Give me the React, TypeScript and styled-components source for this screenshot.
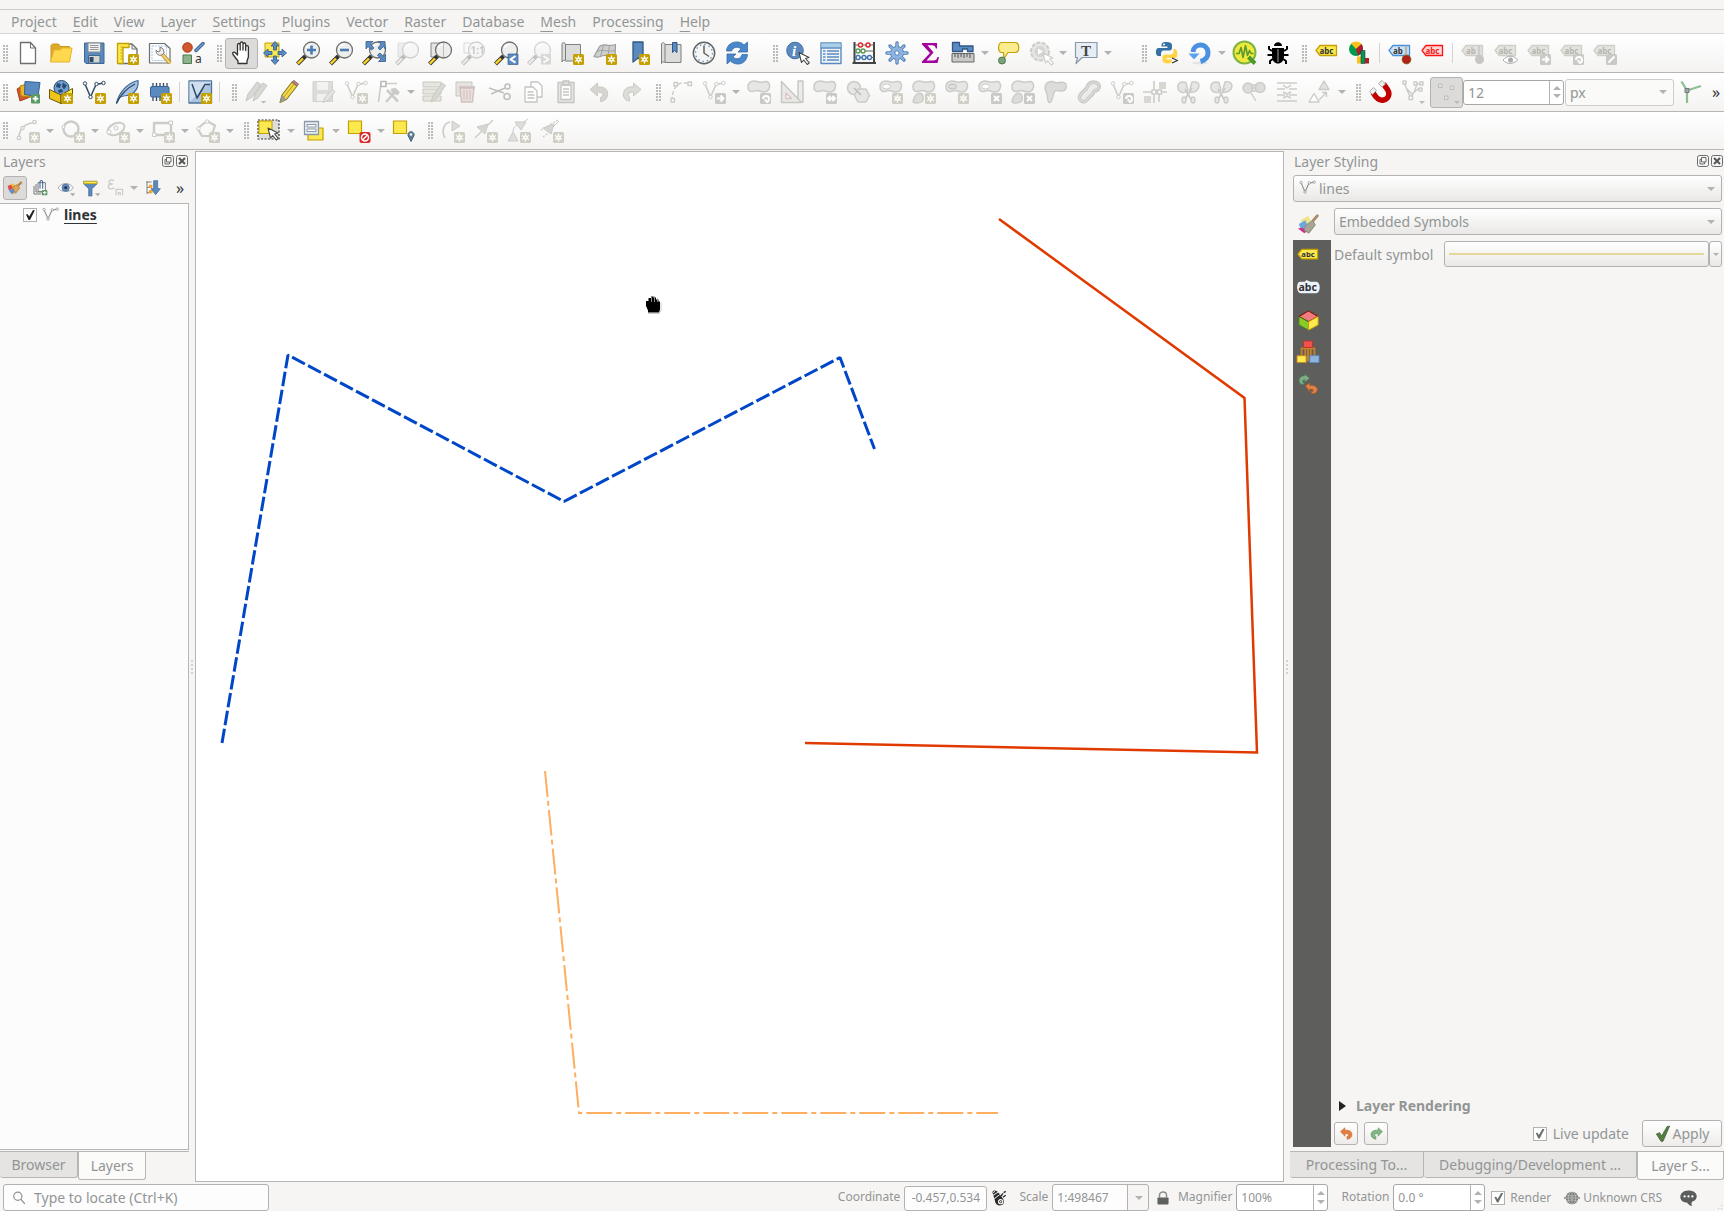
import React, { ReactNode } from 'react';
import styled, { createGlobalStyle, css } from 'styled-components';

const c = {
  window: '#f6f5f4',
  text: '#929595',
  line: '#b8b6b4',
  soft: '#cfcdcb',
  dark: '#2e3436',
  blue: '#5b8ac0',
  off: '#cbcbc7',
  offFill: '#e6e6e4',
};

const Global = createGlobalStyle`
  * { box-sizing: border-box; }
  html, body { margin: 0; background: ${c.window}; }
  body { overflow: hidden; }
  body, button, input, select {
    font-family: "Noto Sans", "Open Sans", sans-serif;
    font-size: 14px;
    color: ${c.text};
  }
  button { padding: 0; border: 0; background: none; }
`;

/* ---------- layout ---------- */

const Window = styled.div`
  display: flex;
  flex-direction: column;
  height: 100vh;
  overflow: hidden;
  background: ${c.window};
`;
const TitleStrip = styled.div`
  flex: none;
  height: 10px;
  border-bottom: 1px solid ${c.soft};
`;
const MenuBar = styled.nav`
  display: flex;
  flex: none;
  height: 24px;
  padding: 0 3px;
  border-bottom: 1px solid #d8d6d4;
`;
const MenuItem = styled.button`
  padding: 0 8px;
  line-height: 23px;
  u { text-decoration-thickness: 1px; text-underline-offset: 4px; }
`;
const Toolbar = styled.div<{ $h: number }>`
  display: flex;
  align-items: center;
  flex: none;
  height: ${p => p.$h}px;
  overflow: hidden;
  border-bottom: 1px solid ${c.line};
  background: linear-gradient(#fff, #f4f3f2);
`;
const Handle = styled.span<{ $gap?: number }>`
  flex: none;
  width: 11px;
  height: 17px;
  margin-left: ${p => p.$gap ?? 0}px;
  padding: 0 3px;
  background: radial-gradient(circle at 1px 1px, #bdbbb9 1px, transparent 1px) 3px 0 / 3px 3px repeat;
  background-clip: content-box;
`;
const Separator = styled.span`
  flex: none;
  width: 1px;
  height: 20px;
  margin: 0 3px;
  background: #d5d3d1;
`;
const ToolButton = styled.button<{ $pressed?: boolean; $size?: number }>`
  display: flex;
  flex: none;
  align-items: center;
  justify-content: center;
  width: ${p => p.$size ?? 33}px;
  height: ${p => (p.$size ? 24 : 31)}px;
  border: 1px solid transparent;
  border-radius: 3px;
  ${p => p.$pressed && css`
    border-color: #b5b3b1;
    background: #dcdbda;
  `}
`;
const ArrowButton = styled.button`
  display: flex;
  flex: none;
  align-items: center;
  justify-content: center;
  width: 12px;
  height: 31px;
`;
const Triangle = styled.span<{ $up?: boolean; $small?: boolean }>`
  display: block;
  border: solid transparent;
  border-width: ${p => (p.$small ? '0 3px' : '0 4px')};
  ${p => (p.$up ? 'border-bottom' : 'border-top')}: ${p => (p.$small ? 3 : 4)}px solid #b4b2b0;
`;
const More = styled.button`
  flex: none;
  width: 16px;
  margin-left: auto;
  color: ${c.dark};
  font-size: 16px;
  line-height: 20px;
`;
const Main = styled.main`
  display: flex;
  flex: 1;
  min-height: 0;
`;
const Dock = styled.section<{ $w: number }>`
  display: flex;
  flex-direction: column;
  flex: none;
  width: ${p => p.$w}px;
  padding-bottom: 2px;
`;
const Splitter = styled.div<{ $w: number }>`
  display: flex;
  align-items: center;
  justify-content: center;
  flex: none;
  width: ${p => p.$w}px;
  &::after {
    content: '';
    width: 2px;
    height: 15px;
    background: radial-gradient(circle, #d4d2d0 1px, transparent 1px) 0 0 / 2px 4px;
  }
`;
const Canvas = styled.div`
  flex: 1;
  min-width: 0;
  margin-top: 1px;
  border: 1px solid ${c.line};
  background: #fff;
  svg { display: block; width: 100%; height: 100%; }
`;
const DockTitle = styled.header<{ $left: number }>`
  display: flex;
  align-items: center;
  gap: 2px;
  flex: none;
  height: 25px;
  padding: 0 1px 3px ${p => p.$left}px;
  h2 { flex: 1; margin: 0; font-size: 14px; font-weight: 400; }
  button { display: flex; }
`;
const LayerTools = styled.div`
  display: flex;
  align-items: center;
  flex: none;
  height: 28px;
  padding: 0 1px 3px 3px;
`;
const Tree = styled.ul`
  flex: 1;
  margin: 0;
  padding: 1px 0 0 23px;
  list-style: none;
  border: 1px solid ${c.line};
  border-left: 0;
  background: #fcfcfc;
`;
const TreeRow = styled.li`
  display: flex;
  align-items: center;
  gap: 5px;
  height: 20px;
  label {
    color: ${c.dark};
    font-weight: 700;
    line-height: 20px;
    text-decoration: underline;
    text-decoration-thickness: 1px;
    text-underline-offset: 3px;
  }
`;
const Check = styled.input<{ $strong?: boolean }>`
  appearance: none;
  display: grid;
  place-content: center;
  flex: none;
  width: 14px;
  height: 14px;
  margin: 0;
  border: 1px solid #b4b2b0;
  background: #fff;
  &:checked::after {
    content: '';
    width: 10px;
    height: 10px;
    background: ${p => (p.$strong ? '#222' : '#6b6e6e')};
    clip-path: polygon(10% 45%, 28% 42%, 42% 66%, 80% 0, 98% 6%, 50% 100%, 36% 100%);
  }
`;
const Tabs = styled.div`
  display: flex;
  align-items: flex-start;
  flex: none;
  height: 29px;
  margin-top: 1px;
  border-top: 1px solid ${c.line};
`;
const Tab = styled.button<{ $w: number; $active?: boolean }>`
  flex: none;
  width: ${p => p.$w}px;
  height: ${p => (p.$active ? 28 : 26)}px;
  border: 1px solid ${c.line};
  border-top: 0;
  border-left-width: ${p => (p.$active ? 1 : 0)}px;
  border-radius: 0 0 3px 3px;
  background: ${p => (p.$active ? '#fbfbfa' : '#e5e4e2')};
  line-height: 24px;
`;
const StyleBody = styled.div`
  display: flex;
  flex: 1;
  min-height: 0;
  gap: 3px;
  padding: 6px 2px 3px 3px;
`;
const StylePage = styled.div`
  display: flex;
  flex-direction: column;
  flex: 1;
  min-width: 0;
`;
const SideTabs = styled.div`
  display: flex;
  flex-direction: column;
  width: 38px;
`;
const SideTab = styled.button`
  display: flex;
  align-items: center;
  justify-content: center;
  flex: none;
  width: 38px;
  height: 32px;
  padding-right: 8px;
`;
const SideDark = styled.div`
  display: flex;
  flex-direction: column;
  flex: 1;
  background: #5e5e5c;
`;
const ComboWrap = styled.div<{ $inset?: number }>`
  display: grid;
  align-items: center;
  flex: none;
  margin: 0 ${p => (p.$inset ? 2 : 0)}px 0 ${p => p.$inset ?? 0}px;
  > * { grid-area: 1 / 1; }
  > svg { margin-left: 6px; pointer-events: none; }
  > span { justify-self: end; margin-right: 7px; pointer-events: none; }
`;
const Select = styled.select<{ $left?: number; $flat?: boolean }>`
  appearance: none;
  width: 100%;
  height: 27px;
  padding: 0 20px 0 ${p => p.$left ?? 4}px;
  border: 1px solid ${p => (p.$flat ? '#cfcdcb' : '#b4b2b0')};
  border-radius: 3px;
  background: ${p => (p.$flat ? '#fafaf9' : 'linear-gradient(#fff, #e9e8e6)')};
`;
const SymbolRow = styled.div`
  display: flex;
  align-items: center;
  margin-top: 6px;
  > span { flex: none; width: 110px; }
`;
const SymbolButton = styled.button`
  flex: 1;
  height: 26px;
  padding: 0 4px;
  border: 1px solid #b4b2b0;
  border-radius: 3px;
  background: linear-gradient(#fff, #e9e8e6);
  i { display: block; height: 2px; background: #e4d79c; }
`;
const SymbolMenu = styled(SymbolButton)`
  display: flex;
  flex: none;
  align-items: center;
  justify-content: center;
  width: 13px;
  padding: 0;
`;
const Rendering = styled.button`
  display: flex;
  align-items: center;
  gap: 10px;
  margin-top: auto;
  padding-left: 5px;
  font-weight: 700;
  line-height: 26px;
  &::before {
    content: '';
    border-left: 7px solid #222;
    border-top: 5px solid transparent;
    border-bottom: 5px solid transparent;
  }
`;
const Actions = styled.div`
  display: flex;
  align-items: center;
  gap: 6px;
  height: 27px;
  margin-top: 1px;
  label { flex: none; margin-right: 7px; }
`;
const RaisedButton = styled.button<{ $w: number; $h: number }>`
  display: flex;
  align-items: center;
  justify-content: center;
  flex: none;
  gap: 2px;
  width: ${p => p.$w}px;
  height: ${p => p.$h}px;
  border: 1px solid #b4b2b0;
  border-radius: 3px;
  background: linear-gradient(#fff, #edecea);
`;
const Spacer = styled.span`
  flex: 1;
`;
const StatusBar = styled.footer`
  display: flex;
  align-items: flex-start;
  gap: 4px;
  flex: none;
  height: 29px;
  padding: 2px 0 0 3px;
  overflow: hidden;
  input, label, button, select { font-size: 12px; }
`;
const Locator = styled.div`
  display: flex;
  align-items: center;
  gap: 8px;
  flex: none;
  width: 266px;
  height: 27px;
  padding-left: 8px;
  border: 1px solid #b4b2b0;
  border-radius: 3px;
  background: #fdfdfd;
  && input {
    flex: 1;
    min-width: 0;
    padding: 0;
    border: 0;
    outline: 0;
    background: none;
    font-size: 14px;
  }
  input::placeholder { color: ${c.text}; opacity: 1; }
`;
const StatusLabel = styled.label<{ $w?: number }>`
  flex: none;
  width: ${p => (p.$w ? `${p.$w}px` : 'auto')};
  line-height: 26px;
  text-align: right;
  white-space: nowrap;
`;
const StatusIcon = styled.span<{ $w: number }>`
  display: flex;
  align-items: center;
  justify-content: center;
  flex: none;
  width: ${p => p.$w}px;
  height: 27px;
`;
const Field = styled.input<{ $w: number }>`
  flex: none;
  width: ${p => p.$w}px;
  height: 25px;
  margin-top: 2px;
  padding: 0 4px 2px;
  border: 1px solid #b4b2b0;
  border-radius: 3px;
  background: #fdfdfd;
  text-align: center;
`;
const SpinBox = styled.div<{ $w: number; $h: number }>`
  display: flex;
  flex: none;
  width: ${p => p.$w}px;
  height: ${p => p.$h}px;
  border: 1px solid #a9a7a5;
  border-radius: 3px;
  background: #fff;
  input {
    flex: 1;
    min-width: 0;
    padding: 0 4px;
    border: 0;
    background: none;
  }
  > span {
    display: flex;
    flex-direction: column;
    width: 14px;
    padding: 4px 0;
    border-left: 1px solid #b4b2b0;
  }
  button {
    display: flex;
    flex: 1;
    align-items: center;
    justify-content: center;
  }
`;
const StatusCheck = styled.div`
  display: flex;
  align-items: center;
  gap: 5px;
  flex: none;
  width: 71px;
  height: 27px;
  padding-left: 2px;
`;
const StatusButton = styled.button`
  display: flex;
  align-items: center;
  gap: 3px;
  flex: none;
  height: 27px;
  white-space: nowrap;
`;
const Grip = styled.span`
  flex: none;
  width: 10px;
  height: 10px;
  margin-top: 17px;
  background: radial-gradient(circle, #c4c2c0 1px, transparent 1px) 0 0 / 3px 3px;
  clip-path: polygon(100% 0, 100% 100%, 0 100%);
`;
const Drawing = styled.svg`
  flex: none;
  overflow: visible;
`;

/* ---------- drawing helpers ---------- */

const Svg = ({ children, s = 24 }: { children: ReactNode; s?: number }) => (
  <Drawing width={s} height={s} viewBox="0 0 24 24" fill="none" strokeLinejoin="round">{children}</Drawing>
);
const Dim = ({ children, o = 0.3 }: { children: ReactNode; o?: number }) => (
  <g opacity={o} filter="grayscale(1)">{children}</g>
);
const NewBadge = ({ off }: { off?: boolean }) => (
  <g>
    <rect x="13" y="13" width="11" height="11" rx="1.5" fill={off ? '#d0cfc5' : '#c4a000'} />
    <path d="M18.500 14.500v8M15 16.500l7 4M22 16.500l-7 4" stroke="#fff" strokeWidth="1.300" />
    <circle cx="18.500" cy="18.500" r="2.200" fill="#fff" />
    <circle cx="18.500" cy="18.500" r=".8" fill={off ? '#d0cfc5' : '#c4a000'} />
  </g>
);
const GreyBadge = ({ d }: { d: string }) => (
  <g>
    <rect x="13" y="13" width="11" height="11" rx="1.500" fill="#c9c9c7" />
    <path d={d} stroke="#fff" strokeWidth="2" />
  </g>
);
const arrowR = 'M15 18.500h6M18.500 15.500l3 3-3 3';
const arrowH = 'M15.500 18.500h6M17.500 16l-2.500 2.500 2.500 2.500M19.500 16l2.500 2.500-2.500 2.500';
const rot = 'M16 19a3 3 0 1 1 3 3M18.500 19v2.500';
const cross = 'M16 16l5 5M21 16l-5 5';

const Magnifier = ({ children }: { children?: ReactNode }) => (
  <g>
    <path d="M9.500 15L1.500 23" stroke="#333" strokeWidth="4" />
    <path d="M7 17.500L1.800 22.700" stroke="#f9d423" strokeWidth="2.400" />
    <circle cx="15.500" cy="9" r="8" fill="#eeeeec" stroke="#6c6f6e" strokeWidth="1.300" />
    <path d="M10.500 7a5.500 5.500 0 0 1 5-3.500" stroke="#fff" strokeWidth="1.400" />
    {children}
  </g>
);
const Tag = ({ fill, stroke, text, color = '#2e3436' }: { fill: string; stroke: string; text: string; color?: string }) => (
  <g>
    <path d="M1 9.500L5 4.500H21.500V14.500H5Z" fill={fill} stroke={stroke} strokeWidth="1.300" />
    <text x={text === 'ab' ? 5 : 4.500} y="12.500" fontFamily="Noto Sans, sans-serif" fontSize="8" fontWeight="700" fill={color}>{text}</text>
  </g>
);
const Nodes = ({ color = '#5c6468', node = '#fff' }: { color?: string; node?: string }) => (
  <g stroke={color} strokeWidth="1.500">
    <path d="M3 4L8.500 17L14 4.500 21.500 3" />
    <g fill={node} strokeWidth="1">
      <circle cx="3" cy="3.500" r="1.700" /><circle cx="8.500" cy="17" r="1.700" /><circle cx="14.500" cy="4" r="1.700" /><circle cx="21.500" cy="3" r="1.700" />
    </g>
  </g>
);
const Blob = () => (
  <path d="M1 6.500C1 1.500 6 0 10 1.500c4 1.500 6 .5 8.500 0C22 1 23.500 5 22 8.500c-1 3-3 3.500-5.500 3.500s-4-1.500-6.500-1.500S6.500 12 4 11.500 1 9 1 6.500Z" fill={c.offFill} stroke={c.off} strokeWidth="1.500" />
);
const Part = () => (
  <path d="M1 21c1-5 5-9 8-7.500 3 1.500 3 7 .5 8.500S0 23.500 1 21Z" fill="#dcdcda" stroke={c.off} strokeWidth="1.400" />
);
const Pointer = ({ x, y, color = '#444' }: { x: number; y: number; color?: string }) => (
  <path transform={`translate(${x} ${y})`} d="M0 0l2.500 10 2.200-2.500 3.600 4.500 2-1.700-3.700-4.300L10 5Z" fill="#fff" stroke={color} strokeWidth="1.100" />
);
const OffTag = ({ text }: { text: string }) => <Tag fill="#e4e4df" stroke="#cfcfc9" text={text} color="#b4b4b0" />;

/* ---------- icons ---------- */

const icons: Record<string, ReactNode> = {
  doc: <><path d="M4.500 1.500h10l5 5.500v15.500h-15z" fill="#fff" stroke="#6c6f6e" strokeWidth="1.300" /><path d="M14.500 1.500V7h5" stroke="#6c6f6e" /></>,
  folder: <><path d="M2 20V4.500L3.500 3h6l2 2.500h9V9" fill="#dfa928" stroke="#c99a1c" /><path d="M1.500 21L5 9h6l2-2h10l-2.500 14Z" fill="#ffd84d" stroke="#e3b52e" /></>,
  save: <><path d="M2.500 2h19.500v20.500h-18L2.500 21z" fill={c.blue} stroke="#3d6797" /><rect x="6" y="2" width="12.500" height="9" fill="#eee" stroke="#8a8d8c" /><path d="M8 4.500h8.500M8 6.500h8.500M8 8.500h8.500" stroke="#999" /><rect x="6.500" y="14.500" width="11.500" height="7.500" fill="#d3d7cf" stroke="#46688e" /><rect x="7.500" y="16" width="4" height="5" fill="#2e4b6d" /></>,
  newlayout: <><path d="M4 3h13l5 5v14.500H4z" fill="#fff" stroke="#6c6f6e" strokeWidth="1.300" /><path d="M17 3v5h5" stroke="#6c6f6e" /><path d="M2.500 2.500H14v4H8v16H2.500z" fill="#fce94f" stroke="#c4a000" strokeWidth="1.300" /><path d="M5.500 6h2.500M5.500 9h2.500M5.500 12h2.500M5.500 15h2.500M5.500 18h2.500" stroke="#c4a000" /><NewBadge /></>,
  layouts: <><path d="M1.500 2.500h15l5.500 5v14.500H1.500z" fill="#fff" stroke="#6c6f6e" strokeWidth="1.200" /><path d="M4 5h14.500v14.500H4z" stroke="#a9c3dd" strokeDasharray="2 1" /><path d="M14 13l8 9" stroke="#b58a2a" strokeWidth="4" /><path d="M14 13l8 9" stroke="#f2cf73" strokeWidth="2.400" /><path d="M8 9c0 4 2 6 6 5l2-2c0-3-1-5-4-6v4l-2 1Z" fill="#eee" stroke="#777" /></>,
  styles: <><circle cx="6.500" cy="6.500" r="4.800" fill="#d3572c" stroke="#a33b17" /><path d="M15 9.500L22 2.500" stroke="#3d6797" strokeWidth="3.500" strokeLinecap="round" /><path d="M15 9.500L22 2.500" stroke="#6f9bd0" strokeWidth="1.500" strokeLinecap="round" /><rect x="2" y="14" width="8.500" height="8.500" fill="#8cb38c" stroke="#4d7a4f" /><text x="14" y="22" fontFamily="Noto Sans, sans-serif" fontSize="12" fill="#333">a</text></>,
  hand: <path d="M8 22.500v-2.500L3 13.500c-1.200-2 1-3.200 2.400-1.700L7.500 14V4c0-2 2.500-2 2.700 0v5-6.500c0-2 2.700-2 2.800 0V9 3.500c0-2 2.700-2 2.700 0v6V6c.2-1.800 2.600-1.700 2.700 0v10L17 20v2.500Z" fill="#fff" stroke="#333" strokeWidth="1.300" />,
  pan: <><rect x="2" y="2" width="14" height="14" fill="#fce94f" stroke="#c4a000" /><path d="M12 .5l4 4.500h-2.500v4h-3V5H8ZM12 23.500l-4-4.500h2.500v-4h3v4H16ZM.5 12L5 8v2.500h4v3H5V16ZM23.500 12L19 16v-2.500h-4v-3h4V8Z" fill={c.blue} stroke="#35608f" strokeWidth=".9" /></>,
  zoomin: <Magnifier><path d="M15.500 4.500v9M11 9h9" stroke="#4a7bb5" strokeWidth="2.600" /></Magnifier>,
  zoomout: <Magnifier><path d="M11 9h9" stroke="#4a7bb5" strokeWidth="2.600" /></Magnifier>,
  zoomfull: <Magnifier><path d="M4 .5h7L8.500 3l3.500 4-2.500 2L6 5.500 4 8ZM23 .5h-6.500L19 3l-3 4 2 2 3.500-3.500L23.500 8ZM23.500 20.500h-7L19 18l-3.500-4 2.500-2 3.500 3.500 2-2.500Z" fill={c.blue} stroke="#35608f" strokeWidth=".8" /></Magnifier>,
  zoomsel: <Dim o={0.3}><path d="M3 2h12v14H3z" fill="#ddd38c" stroke="#c4a000" /><Magnifier /></Dim>,
  zoomlayer: <><path d="M3 2h14v14H3z" fill="#e5e5e3" stroke="#888" /><Magnifier><path d="M15.500 2v14" stroke="#bbb" /></Magnifier></>,
  zoom11: <Dim o={0.3}><path d="M3 2h12v10H3z" stroke="#888" /><Magnifier><text x="9.500" y="13" fontFamily="Noto Sans, sans-serif" fontSize="10" fontWeight="700" fill="#555">1:1</text></Magnifier></Dim>,
  zoomlast: <Magnifier><rect x="14" y="13" width="10" height="10.500" fill={c.blue} stroke="#35608f" strokeWidth=".7" /><path d="M21.500 15l-5 3.300 5 3.300" stroke="#fff" strokeWidth="2" /></Magnifier>,
  zoomnext: <Dim o={0.28}><Magnifier><rect x="14" y="13" width="10" height="10.500" fill="#888" /><path d="M16.500 15l5 3.300-5 3.300" stroke="#fff" strokeWidth="2" /></Magnifier></Dim>,
  newmap: <><path d="M2 2.500c2-2 3.500 0 3.500 1h15v16.500h-15c0-1-3.500-1-3.500 1Z" fill="#dcdcda" stroke="#7d807f" /><path d="M5.500 3.500v16" stroke="#7d807f" /><NewBadge /></>,
  new3d: <><path d="M1 15.500L6.500 5.500c5-4 8 1 16-2L22 16c-5 1-7-2-11-1.500s-6 3-10 1Z" fill="#cfcfcd" stroke="#9b9e9d" strokeWidth="1.200" /><path d="M4 10.500c5-3 10 1 18-1M10.500 4.500L7.500 15.500M16.500 4.500l-1.500 10" stroke="#9b9e9d" strokeWidth=".9" /><NewBadge /></>,
  newbook: <><path d="M7 1h10v20l-5-4-5 4Z" fill={c.blue} stroke="#2f5787" strokeWidth="1.300" /><NewBadge /></>,
  book: <><path d="M2.500 2.500c2-2 3.500 0 3.500 1h16v18H6c-1-1-3.500-1-3.500 1Z" fill="#dcdcda" stroke="#7d807f" /><path d="M6 3.500V21" stroke="#7d807f" /><path d="M13.500 1.500h4.500v10l-2.300-2-2.200 2Z" fill={c.blue} stroke="#2f5787" /></>,
  clock: <><circle cx="12" cy="12" r="10.700" fill="#f6f6f5" stroke="#5f6261" strokeWidth="1.400" /><circle cx="12" cy="12" r="8.500" stroke="#6b95c6" strokeDasharray="1.500 2.950" strokeWidth="1.400" /><path d="M12 4.500V12l5 3.500" stroke="#5f6261" strokeWidth="1.500" /></>,
  refresh: <g fill="#4a86c8" stroke="#3470b3" strokeWidth=".8"><path d="M1.500 10C2 3 8 .5 13 1c3 .3 4.500 1.500 6 3l3.500-3v10h-9.500l3-3c-3-3-8-2-9.500 2Z" /><path d="M22.500 13.500C22 20 17 23.500 12 23c-3-.3-5-1.500-6.500-3L2 23V13h9l-3 3c3 3 8 2 9-2.500Z" /></g>,
  info: <><circle cx="9" cy="9.500" r="8.300" fill={c.blue} stroke="#42709f" /><text x="6" y="14.500" fontFamily="Liberation Serif, serif" fontSize="15" fontStyle="italic" fontWeight="700" fill="#fff">i</text><Pointer x={13} y={11.500} /></>,
  table: <><rect x="2" y="2" width="20" height="20.500" fill="#eef3f8" stroke={c.blue} strokeWidth="1.400" /><path d="M2.500 2.500h19v4h-19z" fill="#a9d0e8" /><path d="M2 7h20M8 10h12M8 13h12M8 16h12M8 19h12M4 10h2.500M4 13h2.500M4 16h2.500M4 19h2.500" stroke={c.blue} strokeWidth="1.300" /></>,
  abacus: <><path d="M2.500 1v21M22 1v21M.5 22h23.500" stroke="#444" strokeWidth="2" /><path d="M3 4h19M3 10h19M3 16.500h19" stroke="#666" /><g fill="#fff" strokeWidth="1.400"><circle cx="8.500" cy="4" r="2" stroke="#d22" /><circle cx="16" cy="4" r="2" stroke="#d22" /><circle cx="6" cy="10" r="2" stroke="#5a9a55" /><circle cx="11" cy="10" r="2" stroke="#5a9a55" /><circle cx="6" cy="16.500" r="2" stroke="#3f74b0" /><circle cx="12" cy="16.500" r="2" stroke="#3f74b0" /><circle cx="17.500" cy="16.500" r="2" stroke="#3f74b0" /></g></>,
  gear: <><path d="M12 2v20M2 12h20M5 5l14 14M19 5L5 19" stroke="#4f7fb8" strokeWidth="3.400" strokeLinecap="round" /><circle cx="12" cy="12" r="6.500" fill="#8db3de" stroke="#4f7fb8" /><path d="M12 2.500v19M2.500 12h19M5.300 5.300l13.400 13.400M18.700 5.300L5.300 18.700" stroke="#8db3de" strokeWidth="1.800" strokeLinecap="round" /><circle cx="12" cy="12" r="2.200" fill="#fff" stroke="#4f7fb8" /></>,
  sigma: <path d="M4 2h15v5.500h-1.200C17.500 5 16 4.300 14 4.300H9.500l6 7.200-7 8h6.500c3 0 3.800-1 4.500-3.500H21L19.500 22H4v-1.500l8-8.500L4 3.500Z" fill="#a3009c" />,
  measure: <><path d="M1.500 1.500h7V5h13.500v5.500h-5.500V8h-5v2.500H1.500Z" fill={c.blue} stroke="#2f5787" strokeWidth="1.300" /><rect x="1" y="12.500" width="22" height="8.500" fill="#c9c9c7" stroke="#666" /><path d="M4 13v3M7 13v4M10 13v3M13 13v4M16 13v3M19 13v4" stroke="#555" /></>,
  tip: <><path d="M6 1.500h13c5 0 5 10 0 10h-7l-4 6-.5-6H5.500c-4 0-4-10 .5-10Z" fill="#fbec8e" stroke="#c4a000" strokeWidth="1.200" /><circle cx="6" cy="19.500" r="3.500" fill="#7ba37b" stroke="#4d7a4f" /></>,
  action: <><circle cx="11" cy="10.500" r="9" fill={c.offFill} stroke={c.off} strokeWidth="2" strokeDasharray="4 1.500" /><circle cx="11" cy="10.500" r="5.500" fill="#d6d6d4" /><path d="M9 7.500l5 3-5 3Z" fill="#fff" /><Pointer x={14} y={12} color={c.off} /></>,
  textbox: <><path d="M1.500 1.500h21.500v15H8L2 22.500l1.500-6h-2Z" fill="#e6edf5" stroke="#8a99a8" strokeWidth="1.200" /><text x="7" y="14.500" fontFamily="Liberation Serif, serif" fontSize="15" fontWeight="700" fill="#444">T</text></>,
  python: <><path d="M11.500 1c-5 0-5 2-5 4.500h6V7H3.500C0 7 0 15 3.500 15H6v-2.500C6 10 8 9.500 9 9.500h5.500c1.500 0 2.500-1 2.500-2.500V4c0-2-2-3-5.500-3Z" fill="#3571a6" /><path d="M12 22.500c5 0 5-2 5-4h-5.500v-1.500H20c3.500 0 3-8.500 0-9h-1.500v2.500c0 2-1.500 3-3 3H10c-1.500 0-2.500 1-2.500 2.500v3c0 2 2 3.500 4.500 3.500Z" fill="#ffd343" /><circle cx="9" cy="3.500" r="1" fill="#fff" /><path d="M17 17l5.500 2.500-5.500 2.500" stroke="#333" strokeWidth="1.200" /></>,
  reload: <><ellipse cx="12" cy="22" rx="8" ry="1.500" fill="#e3e3e3" /><path d="M5 11C5.500 2 19 1.500 20 11c.3 4-2 8-7.500 9.500" stroke="#4a90e2" strokeWidth="5" /><path d="M.5 12.500h11L6 18.500Z" fill="#5aa0f0" /></>,
  pulse: <><circle cx="11.500" cy="11.500" r="11" fill="#f0e93c" stroke="#7cb342" strokeWidth="2" /><path d="M3 12.500h3l2-6 2 10 2.500-12 2 10 2-5 1.500 3h2.500" stroke="#5c9a2f" strokeWidth="1.600" /><path d="M15.500 16l6.500 6.500" stroke="#4c9a2a" strokeWidth="4" /></>,
  bug: <><path d="M8 5c0-5 8-5 8 0ZM6 7h12v8c0 10-12 10-12 0Z" fill="#000" /><path d="M6 10L3 8V5M18 10l3-2V5M6 14H1.500M18 14h4.500M7 18l-3 2v3M17 18l3 2v3" stroke="#000" strokeWidth="2" /><path d="M12 8v13" stroke="#888" strokeWidth="1.200" /></>,
  abcY: <Tag fill="#fce94f" stroke="#c4a000" text="abc" />,
  pie: <><circle cx="8" cy="8" r="7" fill="#009a4e" /><path d="M8 8L3 2.500C6-.2 11-.2 13.500 3Z" fill="#fcc21b" /><path d="M8 8l5.500-5c2.500 3 2 9-3.500 11.500Z" fill="#b01c2a" /><rect x="9" y="15.500" width="4" height="7" fill="#fcc21b" /><rect x="13" y="9.500" width="4" height="13" fill="#009a4e" stroke="#124" strokeWidth=".5" /><rect x="17" y="17" width="4" height="5.500" fill="#b01c2a" /></>,
  abB: <><Tag fill="#cfe2f7" stroke="#4a90d9" text="ab" /><path d="M18 6v9" stroke="#b5b8b8" strokeWidth="2.600" strokeLinecap="round" /><circle cx="18.500" cy="18.500" r="4.500" fill="#b3201c" stroke="#771" strokeWidth=".7" /></>,
  abcR: <Tag fill="#ffd5d5" stroke="#f11" text="abc" color="#e22" />,
  abOff: <><OffTag text="ab" /><path d="M18 6v9" stroke="#ccc" strokeWidth="2.600" strokeLinecap="round" /><circle cx="18.500" cy="18.500" r="4.500" fill="#c9c4c4" /></>,
  abcEye: <><OffTag text="abc" /><path d="M9 19c4-5 11-5 14.500 0-4 4.500-11 4.500-14.500 0Z" fill="#fff" stroke="#aaa" /><circle cx="16.500" cy="19" r="2.500" fill="#aaa" /></>,
  abcMove: <><OffTag text="abc" /><GreyBadge d={arrowR} /></>,
  abcRot: <><OffTag text="abc" /><GreyBadge d={rot} /></>,
  abcEdit: <><OffTag text="abc" /><GreyBadge d="M15.500 21.500l6-6" /></>,

  dsm: <><path d="M1 9l9-5 4 13-10 4Z" fill="#d3572c" stroke="#a33b17" /><path d="M4 6l11-3v14l-10-1Z" fill="#f0b429" stroke="#b8860b" /><path d="M9 1.500l15 1-2 14-13.500-2Z" fill={c.blue} stroke="#35608f" /><rect x="15" y="14" width="9" height="9.500" rx="1" fill="#5d9964" /><path d="M19.500 16v5.500M16.700 18.700h5.600" stroke="#fff" strokeWidth="1.800" /></>,
  geopkg: <><circle cx="12.500" cy="8" r="7.500" fill="#6f9fd4" stroke="#2c4a6b" /><path d="M8 3l4 1-1 4-4-1ZM14 2.500l4 3-3 4-2-3ZM9 10l4-1 1 3-4 1Z" fill="#2b4a6e" /><path d="M.5 9.500L12 15v8.500L.5 18.500Z" fill="#f0c419" stroke="#6b5600" /><path d="M23.500 8.500L12 15v8.500l11.500-4Z" fill="#fce94f" stroke="#6b5600" /><NewBadge /></>,
  shp: <><Nodes color="#2f4a66" /><NewBadge /></>,
  quill: <><path d="M1.500 23C4 13 12 3 23 .5c1 8-4 14-11 15-4 .5-6 1-7.500 2Z" fill="#a6c3e4" stroke="#3d6797" strokeWidth="1.200" /><path d="M1.500 23.500C6 14 12 8 20 4" stroke="#2f4a66" strokeWidth="1.300" /><NewBadge /></>,
  chip: <><path d="M5 3v18M8.500 3v18M12 3v18M15.500 3v18M19 3v18" stroke="#2f4a66" strokeWidth="1.300" /><rect x="2.500" y="6.500" width="18.500" height="10.500" rx="1.500" fill={c.blue} stroke="#35608f" /><NewBadge /></>,
  virtual: <><rect x="1" y="1" width="22.500" height="22" fill="#aac4e0" stroke="#4d7096" strokeWidth="1.300" /><path d="M1.500 1.500h22L1.500 22Z" fill="#cfdff0" /><path d="M4 4l5 14L17 4.500h5" stroke="#2f4a66" strokeWidth="1.500" /><NewBadge /></>,
  pencils: <g fill="#d8d8d5" stroke="#c6c6c2"><path d="M1 21l2-7L12 2l4 2.500L7 17Z" /><path d="M8 21l2-7L18 3l4 2.500L13 18Z" /><path d="M15.500 21h6l-3 2.500Z" fill="#bbb" stroke="none" /></g>,
  pencil: <><path d="M2 22.500L4 15 14 2l5 4L8.500 19.500Z" fill="#f5d94c" stroke="#8a7a20" strokeWidth="1.100" /><path d="M14 2l2-1.500 4.500 3.500L19 6Z" fill="#d77" stroke="#777" /><path d="M6 17L16 4" stroke="#b59b20" /><path d="M2 22.500L4 15l4.500 4.500Z" fill="#9a9a98" /></>,
  saveOff: <g opacity=".75"><path d="M2 1.500h19.500v20H2z" fill="#d3d3d0" stroke="#c4c4c0" /><rect x="6" y="2" width="11" height="8" fill="#f0f0ef" /><rect x="6" y="14" width="10" height="7" fill="#eee" /><path d="M12 22.500l2-5 7-8 3 2-7 9Z" fill="#dededb" stroke="#bbb" /></g>,
  vNew: <><Nodes color={c.off} /><NewBadge off /></>,
  vertexTool: <g stroke={c.off} strokeWidth="1.600"><path d="M4 3L1.500 22M6 3.500h14" /><rect x="4" y="1.500" width="5" height="5" fill="#fff" stroke="#b9b9b6" /><path d="M10 10l11 11.500" strokeWidth="2.600" /><path d="M9 22l9-10" strokeWidth="2.200" /><path d="M14.500 9.500l3.500-1 4 4-2 2-2-1.500-1.500 1Z" fill={c.off} /></g>,
  multiEdit: <g fill="#e6e5df" stroke="#c9c8c1"><rect x="1" y="2" width="18" height="5" /><rect x="1" y="9" width="18" height="5" /><rect x="1" y="16" width="18" height="5" /><path d="M9 22l2-6L20 3l3.500 2.500L14 19Z" fill="#d8d8d5" /></g>,
  trash: <g fill="#e4e3de" stroke="#c9c8c1"><path d="M1 2h16v14H1z" /><path d="M4 7h16M5 8l1.500 14h11L19 8Z" fill="#ecdedc" stroke="#cdc0be" strokeWidth="1.400" /><path d="M9 10v10M12 10v10M15 10v10" stroke="#cdc0be" /></g>,
  cut: <g stroke="#c0c0bd" strokeWidth="1.600"><path d="M1 8l15 5M3 14l14-6" /><circle cx="19.500" cy="6.500" r="2.500" /><circle cx="19" cy="16.500" r="3" /></g>,
  copy: <g fill="#fff" stroke="#c4c4c1" strokeWidth="1.300"><path d="M10 2h7l4 4v11H10z" /><path d="M4 7h8l4 4v11H4z" /><path d="M6.500 12h6M6.500 15h7M6.500 18h7" /></g>,
  paste: <g stroke="#c4c4c1" strokeWidth="1.300"><rect x="4" y="2.500" width="16" height="20" fill="#e6e6e3" /><path d="M7 5h10v14.500H7z" fill="#fff" /><rect x="9" y="1" width="6" height="4" fill="#ddd" /><path d="M9 9h6M9 12h6M9 15h6" /></g>,
  undoOff: <path d="M3 9.500L10.500 3v4c8-1 11 4 10 9-1 3.500-4 5.500-7 5.500v-4c3-.5 4-5.500-3-5.500v4Z" fill="#d6d5cf" stroke="#cbcac3" />,
  redoOff: <path d="M21 9.500L13.500 3v4C5.500 6 3 11 3.500 16c.8 3.500 3 5 6 5v-4c-2-.5-2.500-5 4-5v4Z" fill="#dcdcd9" stroke="#c9c9c6" />,
  curveOff: <g stroke={c.off} strokeWidth="1.400"><path d="M3 21C3 11 7 3 14 3h6" strokeDasharray="4 2" /><g fill="#fff"><rect x="2" y="18.500" width="3.500" height="3.500" /><rect x="5" y="2.500" width="3.500" height="3.500" /><rect x="19" y="2" width="3.500" height="3.500" /></g></g>,
  vMove: <><Nodes color={c.off} /><GreyBadge d={arrowR} /></>,
  blobRot: <><Blob /><GreyBadge d={rot} /></>,
  triangle: <g stroke="#c6c6c3" strokeWidth="1.400"><path d="M18 1h5v21h-5z" fill="#ecebe5" /><path d="M1.500 1.500v21h20Z" fill="#e8e8e6" /><path d="M6 13v5.500h5.500Z" fill="#fff" stroke="#d9c3c0" /></g>,
  blobMove: <><Blob /><GreyBadge d={arrowH} /></>,
  simplify: <g fill={c.offFill} stroke={c.off} strokeWidth="1.500"><circle cx="8" cy="8" r="6.500" /><path d="M12 9h8l3.500 6.500L20 22h-8l-3.500-6.500Z" /><path d="M8 8l7 7" stroke="#bbb" /></g>,
  ringNew: <><Blob /><ellipse cx="7.500" cy="6.500" rx="4" ry="2.500" fill="#fff" stroke={c.off} /><NewBadge off /></>,
  partNew: <><Blob /><Part /><NewBadge off /></>,
  ringFill: <><Blob /><ellipse cx="7.500" cy="6.500" rx="4" ry="2.500" fill="#ddd" stroke="#bfbfbc" /><NewBadge off /></>,
  ringDel: <><Blob /><ellipse cx="7.500" cy="6.500" rx="4" ry="2.500" fill="#fff" stroke={c.off} /><GreyBadge d={cross} /></>,
  partDel: <><Blob /><Part /><GreyBadge d={cross} /></>,
  reshape: <path d="M1.500 5C3 1 8 1 11 2.500S19 0 22 4c1.500 4-1 7-4 7s-5-1-7 0-2 11-5 11.500S4 16 2.500 13 .5 8 1.500 5Z" fill="#dcdcda" stroke={c.off} strokeWidth="1.400" />,
  offset: <><path d="M6.500 17.500c3-4 6-5 7-8s2.500-3.500 4.500-3" stroke={c.off} strokeWidth="12" strokeLinecap="round" /><path d="M6.500 17.500c3-4 6-5 7-8s2.500-3.500 4.500-3" stroke="#dddcd6" strokeWidth="9" strokeLinecap="round" /><path d="M6.500 17.500c3-4 6-5 7-8s2.500-3.500 4.500-3" stroke={c.off} strokeWidth="6.500" strokeLinecap="round" /><path d="M6.500 17.500c3-4 6-5 7-8s2.500-3.500 4.500-3" stroke="#ececea" strokeWidth="4.500" strokeLinecap="round" /></>,
  vRot: <><Nodes color={c.off} /><GreyBadge d={rot} /></>,
  splitOff: <g stroke={c.off} strokeWidth="1.600"><path d="M0 12h24M11 1v22M16 10v12" /><rect x="9" y="10" width="4" height="4" fill="#fff" /><rect x="14.500" y="10" width="4" height="4" fill="#fff" /><rect x="16" y="2" width="7" height="7" fill="#d8d7cf" stroke="none" /><rect x="1" y="16" width="7" height="7" fill="#d8d7d4" stroke="none" /></g>,
  splitFeat: <g fill={c.offFill} stroke={c.off} strokeWidth="1.400"><path d="M2 9C1 3 5 1 10 2.500l2 8c-3 3-8 3-10-1.500ZM14 9l2-7c3-1 7 0 7 4s-4 7-9 6Z" /><path d="M8 21l8-13M16 21L9 9" strokeWidth="1.800" /><ellipse cx="8" cy="20" rx="2" ry="3" /><ellipse cx="17" cy="20" rx="2" ry="3" /></g>,
  mergeFeat: <g fill="#dcdcda" stroke={c.off} strokeWidth="1.400"><circle cx="6" cy="8" r="5" /><circle cx="18" cy="7.500" r="5" /><path d="M9 5h6M9 8h6M9 11h6M9 13l5 8" fill="none" /></g>,
  trimOff: <g stroke={c.off} strokeWidth="1.500"><path d="M2 3h20M2 9h8M14 9h8M2 15h8M14 15h8M2 21h20" /><path d="M8 5l4 3 4-3M8 12l4 2 4-2M8 18l4-2 4 2" /></g>,
  triMove: <g fill="#e2e2e0" stroke={c.off} strokeWidth="1.400"><path d="M11 9.500L16 1l5 8.500Z" /><path d="M1 22l5-8.500L11 22Z" fill="#fff" /><path d="M11 20l7-7M14 12.500h4.500V17" fill="none" /></g>,
  magnet: <><path d="M4 12.500c3 5.500 6 8.500 10.500 7.500 5-1 6.500-6 4.500-9.500-1-1.500-2.500-4-4.500-6.500" stroke="#c00000" strokeWidth="5.500" /><path d="M.5 11.500l4-4 3 3-4 4ZM9.500 3.500l3.500-3 3.500 3.500L13 7Z" fill="#eee" stroke="#999" strokeWidth=".8" /></>,
  snapV: <g stroke={c.off} strokeWidth="1.400"><path d="M2 2l3 8 4 8 4-8 2-6h6M4 8l6 6 6-5h4" /><g fill="#fff"><rect x="1" y="1" width="3" height="3" /><rect x="12" y="2" width="3" height="3" /><rect x="18" y="2" width="3" height="3" /><rect x="17" y="8" width="3" height="3" /><rect x="7" y="16" width="3.500" height="3.500" /></g><path d="M17 21h6l-3 3Z" fill="#bbb" stroke="none" /></g>,
  snapPts: <g stroke="#bbb" fill="#e4e4e2"><rect x="3.500" y="4" width="3.500" height="3.500" /><rect x="15.500" y="6" width="3.500" height="3.500" /><rect x="9.500" y="16" width="3.500" height="3.500" /><path d="M19 21h6l-3 3Z" fill="#bbb" stroke="none" /></g>,
  topo: <><path d="M8 10.500V23M8 10.500L2.500 1.500M8 10.500L22 6" stroke="#8fbf8f" strokeWidth="2.200" /><rect x="6" y="8.500" width="4" height="4" fill="#9ab" stroke="#777" /></>,

  arc: <><path d="M3 19C3 11 8 4 18 4" stroke={c.off} strokeWidth="1.600" /><g fill="#fff" stroke={c.off} strokeWidth="1.300"><circle cx="3" cy="19" r="1.700" /><circle cx="6.500" cy="9" r="1.700" /><circle cx="18.500" cy="3" r="1.700" /></g><NewBadge off /></>,
  circle: <><circle cx="10" cy="10" r="7.500" stroke={c.off} strokeWidth="2.400" /><circle cx="2.500" cy="8" r="1.500" fill="#fff" stroke={c.off} /><NewBadge off /></>,
  ellipse: <><ellipse cx="10" cy="10" rx="9" ry="5.500" transform="rotate(-25 10 10)" stroke={c.off} strokeWidth="2" /><circle cx="10" cy="9" r="2" stroke={c.off} /><circle cx="3" cy="13" r="2" fill="#fff" stroke={c.off} /><NewBadge off /></>,
  rect: <><rect x="3" y="4" width="17" height="12" stroke={c.off} strokeWidth="2.400" /><g fill="#fff" stroke={c.off}><rect x="1.500" y="14" width="3.500" height="3.500" /><rect x="18" y="2" width="3.500" height="3.500" /></g><NewBadge off /></>,
  poly: <><path d="M11 2L19 6.500 15.500 17H6L1.500 9.500Z" stroke={c.off} strokeWidth="2.200" /><g fill="#fff" stroke={c.off}><circle cx="11" cy="2.500" r="1.700" /><circle cx="2.500" cy="9.500" r="1.700" /></g><NewBadge off /></>,
  selRect: <><rect x="1" y="1" width="21" height="19" fill="#ddd" stroke="#333" strokeDasharray="2 1.500" strokeWidth="1.200" /><rect x="2" y="2" width="13" height="12.500" fill="#fce94f" stroke="#c4a000" /><Pointer x={11} y={9} /></>,
  selForm: <><rect x="6" y="9" width="15" height="12" fill="#fce94f" stroke="#c4a000" strokeWidth="1.200" /><rect x="2.500" y="2.500" width="14" height="13" fill="#e9edf0" stroke="#8a99a8" strokeWidth="1.300" /><path d="M5 5.500h9v2.500H5zM5 10h9v2.500H5z" fill="#fff" stroke="#8a99a8" /></>,
  desel: <><rect x="1.500" y="2" width="13" height="12.500" fill="#fce94f" stroke="#c4a000" strokeWidth="1.200" /><rect x="12.500" y="13" width="11" height="11" rx="2" fill="#d92b2b" /><circle cx="18" cy="18.500" r="3.500" stroke="#fff" strokeWidth="1.500" /><path d="M15.500 21l5-5" stroke="#fff" strokeWidth="1.500" /></>,
  selLoc: <><rect x="1.500" y="2" width="13" height="12.500" fill="#fce94f" stroke="#c4a000" strokeWidth="1.200" /><path d="M19 22.500l-3-6c-1-5 7-5 6 0Z" fill="#5f8299" stroke="#46657a" /><circle cx="19" cy="15.500" r="1.200" fill="#fff" /></>,
  vx1: <><path d="M4 19C0 12 3 4 9 3" stroke={c.off} strokeWidth="1.600" /><path d="M11 2l8 5-8 5Z" fill="#ddd" stroke={c.off} /><NewBadge off /></>,
  vx2: <><path d="M1 19L19 1" stroke={c.off} strokeWidth="1.300" /><path d="M3 8l11-3-3 10Z" fill="#d6d6d4" stroke={c.off} /><NewBadge off /></>,
  vx3: <><path d="M6 13c0-6 5-8 9-9l6-4" stroke={c.off} /><path d="M8 3h11l-5 8ZM1 22l5-9 5 9Z" fill="#ddd" stroke={c.off} /><NewBadge off /></>,
  vx4: <><path d="M1 11L18 1M3 18l8-6" stroke={c.off} strokeWidth="1.300" strokeDasharray="2 1.500" /><path d="M11 10l8-8" stroke={c.off} /><path d="M3 9l11-4-3 10Z" fill="#d6d6d4" stroke={c.off} /><NewBadge off /></>,

  brush: <><path d="M1 9l8-4 9 9-9 8Z" fill="#f0c03c" /><path d="M1 9l5-2 3 5-6 4Z" fill="#e04848" /><path d="M3 16l7-4 2 6-5 3Z" fill="#5b8ee0" /><path d="M8 11l7-4 4 5-6 8Z" fill="#e0a558" stroke="#a77737" /><path d="M16 9l6-6" stroke="#b8853e" strokeWidth="3.500" /></>,
  addGroup: <><path d="M3 9v12h11M6 6v12h10" stroke="#777" strokeWidth="1.500" /><rect x="9" y="4" width="11" height="13" fill="#fff" stroke="#777" strokeWidth="1.500" /><path d="M12 13V3c0-3 4-3 4 0v10" stroke="#3d6797" strokeWidth="1.600" /><rect x="15" y="15" width="8" height="8" rx="1" fill="#5d9964" /><path d="M19 16.500v5M16.500 19h5" stroke="#fff" strokeWidth="1.500" /></>,
  eye: <><path d="M0 12C5 3 18 3 23 12c-4 7-18 7-23 0Z" fill="#fff" stroke="#aaa" strokeWidth="1.500" /><circle cx="11.500" cy="11.500" r="5.500" fill="#5b8ac0" stroke="#46688e" /><circle cx="11.500" cy="11.500" r="2" fill="#223" /><path d="M18 20h8l-4 4.500Z" fill="#aaa" /></>,
  filter: <><path d="M1 2h20v4l-7.500 7v11h-5V13L1 6Z" fill="#5b8ac0" stroke="#46688e" /><path d="M1 2h20v3.500H1z" fill="#fce94f" stroke="#c4a000" /><path d="M18 20h8l-4 4.500Z" fill="#aaa" /></>,
  eps: <><path d="M9 1C5-1 1 0 1.500 3c.3 2.500 3 3 5 3-3 0-6 1-6 4 0 4 6 4 9 1.500" stroke={c.off} strokeWidth="2" /><path d="M12 23v-9h10v9M15.500 23v-4h3v4" stroke={c.off} strokeWidth="1.800" /></>,
  expand: <><path d="M3 2v19M2 3h8M3 11h5M3 19h6" stroke="#777" strokeWidth="1.400" /><path d="M6 7h5v5H6zM6 15h5v5H6z" fill="#f5a623" /><path d="M13 1h6v12h4l-7 9L9 13h4Z" fill="#5b8ac0" stroke="#35608f" /></>,
  vline: <Nodes color="#8a8d8c" />,
  brushBig: <><path d="M4 8l8-5 7 12-9 6Z" fill="#efe48a" /><path d="M2 12l7-4 4 8-8 4Z" fill="#6aa9e0" /><path d="M1 17l5-1 5 4-3 2Z" fill="#d0308a" /><path d="M9 14l8-6 3 5-7 9-5-3Z" fill="#a8a498" stroke="#8d8878" /><path d="M17 9l6-7" stroke="#a98c68" strokeWidth="3" /></>,
  abcHalo: <><path d="M3 5h5l2-2 4 2h6c5 0 5 12 0 12H4C-1 17-1 5 3 5Z" fill="#e9f1fb" /><text x="1.500" y="15" fontFamily="Noto Sans, sans-serif" fontSize="11" fontWeight="700" fill="#333">abc</text></>,
  cube: <><path d="M12 1l11 6.500-11 6-11-6Z" fill="#ef7d7d" stroke="#8d1010" strokeWidth="1.300" /><path d="M1 7.500l11 6V23L1 17Z" fill="#8ac926" stroke="#3c7a1a" /><path d="M23 7.500l-11 6V23l11-6Z" fill="#fce94f" stroke="#c4a000" /></>,
  diagram: <><path d="M5 17V8h14v9M12 6v16M9 8v8M15 8v8" stroke="#c98324" strokeWidth="2" /><rect x="7" y="0" width="10" height="7" fill="#ef5350" stroke="#c0302d" /><rect x="0" y="16" width="10" height="7.500" fill="#fce94f" stroke="#c98324" /><rect x="14" y="16" width="10" height="7.500" fill="#8db3de" stroke="#5b8ac0" /></>,
  history: <><path d="M8 0v2C2 2 0 7 2 11c2 2 5 2 6 0-3 0-3-4 0-4v3l6-5Z" fill="#7fae86" stroke="#4d7a4f" /><path d="M9 14l5-3v3c6-1 10 2 9 6-1 3-4 4-7 3v-2c4 0 3-3-2-3v3Z" fill="#e0824a" stroke="#b85a25" /></>,
  undo: <path d="M1 8.500L9 1.500v4.500c9-1 14 3 13 9-1 5-5 7-9 7.500v-5c4-1 5-5.500-4-5v4.500Z" fill="#e27f3d" stroke="#c9652a" />,
  redo: <path d="M23 8.500L15 1.500v4.500C6 5 1 9 2 15c1 5 5 7 9 7.500v-5c-4-1-4-5.500 4-5v4.500Z" fill="#83b583" stroke="#5c9161" />,
  tick: <path d="M2 12l5-2 3 5L18 1l4-1L12 23H9Z" fill="#55803f" stroke="#32512a" />,
  search: <><circle cx="10" cy="9" r="7" stroke="#8c8f8e" strokeWidth="2" /><path d="M15 14l7 8" stroke="#8c8f8e" strokeWidth="2.200" /></>,
  mouse: <><path d="M2 3c3-4 7-2 10 2l6 8c3 5 1 9-3 10-5 1-9-3-9-7Z" fill="#2a2a2a" /><path d="M3 8l8-5M5 13l8-6M3 4l3-2" stroke="#fff" strokeWidth="1.400" /><circle cx="14.500" cy="17.500" r="4" fill="#fff" /><circle cx="14.500" cy="17.500" r="1.700" stroke="#2a2a2a" strokeWidth="1.400" /><path d="M15 9l3-4M19 4l3-2M18 11l4-3" stroke="#2a2a2a" strokeWidth="2" /></>,
  lock: <><path d="M6 11V7c0-7 12-7 12 0v4" stroke="#8a8d8c" strokeWidth="2.600" /><rect x="2.500" y="11" width="19" height="12" rx="1.500" fill="#5e6160" /></>,
  globe: <><circle cx="12" cy="12" r="9.500" fill="#7b7e7d" /><path d="M4 7.500c5 2 11 2 16 0M3 12h18M4 16.500c5-2 11-2 16 0M12 3v18M10 3c-5 5-5 13 0 18M14 3c5 5 5 13 0 18" stroke="#d6d6d5" strokeWidth=".9" /><path d="M0 12h2.500M21.500 12H24" stroke="#7b7e7d" strokeWidth="2" /></>,
  chat: <><path d="M12 2C-3 2-3 19 10 19c1 2 4 5 7 5-1-2-1-4 0-6 10-3 9-16-5-16Z" fill="#5a5d5c" /><circle cx="6.500" cy="10.500" r="1.600" fill="#fff" /><circle cx="12" cy="10.500" r="1.600" fill="#fff" /><circle cx="17.500" cy="10.500" r="1.600" fill="#fff" /></>,
  float: <g stroke="#6a6d6c" strokeWidth="2"><rect x="1" y="1" width="22" height="22" rx="4" /><rect x="9" y="5" width="9" height="9" /><path d="M9 9H6v9h9v-4" /></g>,
  close: <g stroke="#6a6d6c"><rect x="1" y="1" width="22" height="22" rx="4" strokeWidth="2" /><path d="M6 6l12 12M18 6L6 18" strokeWidth="4" stroke="#555" /></g>,
};

const Icon = ({ n, s }: { n: string; s?: number }) => <Svg s={s}>{icons[n]}</Svg>;

/* Toolbar items: "name" a button, "name*" pressed, "name+" with a drop-down arrow, "|" a separator, "#n" a handle after n pixels. */
const ToolItems = ({ items }: { items: string }) => (
  <>
    {items.split(' ').map((it, i) => {
      if (it === '|') return <Separator key={i} />;
      if (it[0] === '#') return <Handle key={i} $gap={Number(it.slice(1))} />;
      const name = it.replace(/[*+]/, '');
      return (
        <React.Fragment key={i}>
          <ToolButton aria-label={name} $pressed={it.endsWith('*')}><Icon n={name} /></ToolButton>
          {it.endsWith('+') && <ArrowButton aria-label={`${name} menu`}><Triangle /></ArrowButton>}
        </React.Fragment>
      );
    })}
  </>
);

const menus = ['Pro_ject', '_Edit', '_View', '_Layer', '_Settings', '_Plugins', 'Vect_or', '_Raster', '_Database', '_Mesh', 'Pro_cessing', '_Help'];
const row1 = '#0 doc folder save newlayout layouts styles #5 hand* pan zoomin zoomout zoomfull zoomsel zoomlayer zoom11 zoomlast zoomnext newmap new3d newbook book clock refresh #17 info table abacus gear sigma measure+ tip action+ textbox+ #25 python reload+ pulse bug #5 abcY pie | abB abcR | abOff abcEye abcMove abcRot abcEdit';
const row2 = '#0 dsm geopkg shp quill chip | virtual | #6 pencils pencil saveOff vNew vertexTool+ multiEdit trash cut copy paste undoOff redoOff #5 curveOff vMove+ blobRot triangle blobMove simplify ringNew partNew ringFill ringDel partDel reshape offset vRot splitOff splitFeat splitFeat mergeFeat trimOff triMove+ #5 magnet snapV snapPts*';
const row3 = '#0 arc+ circle+ ellipse+ rect+ poly+ #5 selRect+ selForm+ desel+ selLoc #5 vx1 vx2 vx3 vx4';

const Spin = ({ id, w, h, value, label }: { id: string; w: number; h: number; value: string; label?: string }) => (
  <SpinBox $w={w} $h={h}>
    <input id={id} defaultValue={value} aria-label={label} />
    <span>
      <button aria-label="Increase"><Triangle $up /></button>
      <button aria-label="Decrease"><Triangle /></button>
    </span>
  </SpinBox>
);

const UnitCombo = styled(ComboWrap)`
  width: 109px;
  margin-left: 1px;
`;
const ScaleCombo = styled(ComboWrap)`
  width: 97px;
  > span { margin-right: 6px; }
  select {
    border-color: #b4b2b0;
    background: linear-gradient(90deg, #fdfdfd 74px, #b4b2b0 74px, #b4b2b0 75px, #f6f5f4 75px);
  }
`;

const DockHeader = ({ title, left }: { title: string; left: number }) => (
  <DockTitle $left={left}>
    <h2>{title}</h2>
    <button aria-label="Float"><Icon n="float" s={12} /></button>
    <button aria-label="Close"><Icon n="close" s={12} /></button>
  </DockTitle>
);

const MapView = () => (
  <Canvas>
    <svg fill="none" role="img" aria-label="Map canvas">
      <path d="M26 591L92 203L368 349.500L644 205.500L678.500 297" stroke="#0046c8" strokeWidth="3" strokeDasharray="14.500 3.600" strokeLinejoin="bevel" />
      <path d="M349 619L383 961H802" stroke="#fdae61" strokeWidth="2" strokeDasharray="26 4 5 4" />
      <path d="M803 67L1048.500 246L1061 600.500L609 591" stroke="#e03a00" strokeWidth="2.500" />
      <path d="M452 160.500v-2l-2-4.500v-5h2.500v-3h2.500v-1.500h2.500v1h2.500v2h2.500v2h1.500v8l-1 3Z" fill="#000" />
      <path d="M455.500 145v5M458.500 144v6M461.500 146v4" stroke="#aaa" strokeWidth=".8" />
      <path d="M452 161.500h11.500l1.500-3v-8" stroke="#ccc" />
    </svg>
  </Canvas>
);

export default function App() {
  return (
    <Window>
      <Global />
      <TitleStrip />
      <MenuBar>
        {menus.map(m => {
          const [a, b] = m.split('_');
          return <MenuItem key={m}>{a}<u>{b[0]}</u>{b.slice(1)}</MenuItem>;
        })}
      </MenuBar>
      <Toolbar $h={39}><ToolItems items={row1} /></Toolbar>
      <Toolbar $h={39}>
        <ToolItems items={row2} />
        <Spin id="tolerance" w={101} h={25} value="12" label="Snapping tolerance" />
        <UnitCombo>
          <Select $flat aria-label="Tolerance unit" defaultValue="px"><option>px</option></Select>
          <Triangle />
        </UnitCombo>
        <ToolItems items="topo" />
        <More aria-label="More tools">»</More>
      </Toolbar>
      <Toolbar $h={38}><ToolItems items={row3} /></Toolbar>

      <Main>
        <Dock $w={189}>
          <DockHeader title="Layers" left={3} />
          <LayerTools>
            <ToolButton $size={24} $pressed aria-label="Open styling panel"><Icon n="brush" s={16} /></ToolButton>
            <ToolButton $size={26} aria-label="Add group"><Icon n="addGroup" s={16} /></ToolButton>
            <ToolButton $size={25} aria-label="Map themes"><Icon n="eye" s={16} /></ToolButton>
            <ToolButton $size={25} aria-label="Filter legend"><Icon n="filter" s={16} /></ToolButton>
            <ToolButton $size={25} aria-label="Filter by expression"><Icon n="eps" s={16} /></ToolButton>
            <ArrowButton aria-label="Expression menu"><Triangle /></ArrowButton>
            <ToolButton $size={25} aria-label="Expand all"><Icon n="expand" s={16} /></ToolButton>
            <More aria-label="More">»</More>
          </LayerTools>
          <Tree>
            <TreeRow>
              <Check type="checkbox" id="lines" defaultChecked $strong />
              <Icon n="vline" s={17} />
              <label htmlFor="lines">lines</label>
            </TreeRow>
          </Tree>
          <Tabs>
            <Tab $w={78}>Browser</Tab>
            <Tab $w={68} $active>Layers</Tab>
          </Tabs>
        </Dock>
        <Splitter $w={6} />
        <MapView />
        <Splitter $w={6} />
        <Dock $w={434}>
          <DockHeader title="Layer Styling" left={4} />
          <ComboWrap $inset={3}>
            <Select $left={25} aria-label="Layer" defaultValue="lines"><option>lines</option></Select>
            <Icon n="vline" s={17} />
            <Triangle />
          </ComboWrap>
          <StyleBody>
            <SideTabs>
              <SideTab aria-label="Symbology"><Icon n="brushBig" s={22} /></SideTab>
              <SideDark>
                <SideTab aria-label="Labels"><Icon n="abcY" s={23} /></SideTab>
                <SideTab aria-label="Masks"><Icon n="abcHalo" s={23} /></SideTab>
                <SideTab aria-label="3D view"><Icon n="cube" s={21} /></SideTab>
                <SideTab aria-label="Diagrams"><Icon n="diagram" s={22} /></SideTab>
                <SideTab aria-label="History"><Icon n="history" s={20} /></SideTab>
              </SideDark>
            </SideTabs>
            <StylePage>
              <ComboWrap>
                <Select aria-label="Renderer" defaultValue="Embedded Symbols"><option>Embedded Symbols</option></Select>
                <Triangle />
              </ComboWrap>
              <SymbolRow>
                <span>Default symbol</span>
                <SymbolButton aria-label="Default symbol"><i /></SymbolButton>
                <SymbolMenu aria-label="Symbol menu"><Triangle $small /></SymbolMenu>
              </SymbolRow>
              <Rendering>Layer Rendering</Rendering>
              <Actions>
                <RaisedButton $w={24} $h={23} aria-label="Undo"><Icon n="undo" s={13} /></RaisedButton>
                <RaisedButton $w={24} $h={23} aria-label="Redo"><Icon n="redo" s={13} /></RaisedButton>
                <Spacer />
                <Check type="checkbox" id="live" defaultChecked />
                <label htmlFor="live">Live update</label>
                <RaisedButton $w={80} $h={27}><Icon n="tick" s={16} />Apply</RaisedButton>
              </Actions>
            </StylePage>
          </StyleBody>
          <Tabs>
            <Tab $w={134}>Processing To...</Tab>
            <Tab $w={213}>Debugging/Development ...</Tab>
            <Tab $w={87} $active>Layer S...</Tab>
          </Tabs>
        </Dock>
      </Main>

      <StatusBar>
        <Locator>
          <Icon n="search" s={14} />
          <input placeholder="Type to locate (Ctrl+K)" aria-label="Locate" />
        </Locator>
        <Spacer />
        <StatusLabel htmlFor="coord">Coordinate</StatusLabel>
        <Field id="coord" $w={83} defaultValue="-0.457,0.534" />
        <StatusIcon $w={16}><Icon n="mouse" s={16} /></StatusIcon>
        <StatusLabel $w={37} htmlFor="scale">Scale</StatusLabel>
        <ScaleCombo>
          <Select id="scale" defaultValue="1:498467"><option>1:498467</option></Select>
          <Triangle />
        </ScaleCombo>
        <StatusIcon $w={20}><Icon n="lock" s={14} /></StatusIcon>
        <StatusLabel $w={55} htmlFor="magnifier">Magnifier</StatusLabel>
        <Spin id="magnifier" w={92} h={27} value="100%" />
        <StatusLabel $w={57} htmlFor="rotation">Rotation</StatusLabel>
        <Spin id="rotation" w={92} h={27} value="0.0 °" />
        <StatusCheck>
          <Check type="checkbox" id="render" defaultChecked />
          <label htmlFor="render">Render</label>
        </StatusCheck>
        <StatusButton><Icon n="globe" s={16} />Unknown CRS</StatusButton>
        <StatusIcon $w={44}><Icon n="chat" s={17} /></StatusIcon>
        <Grip />
      </StatusBar>
    </Window>
  );
}
